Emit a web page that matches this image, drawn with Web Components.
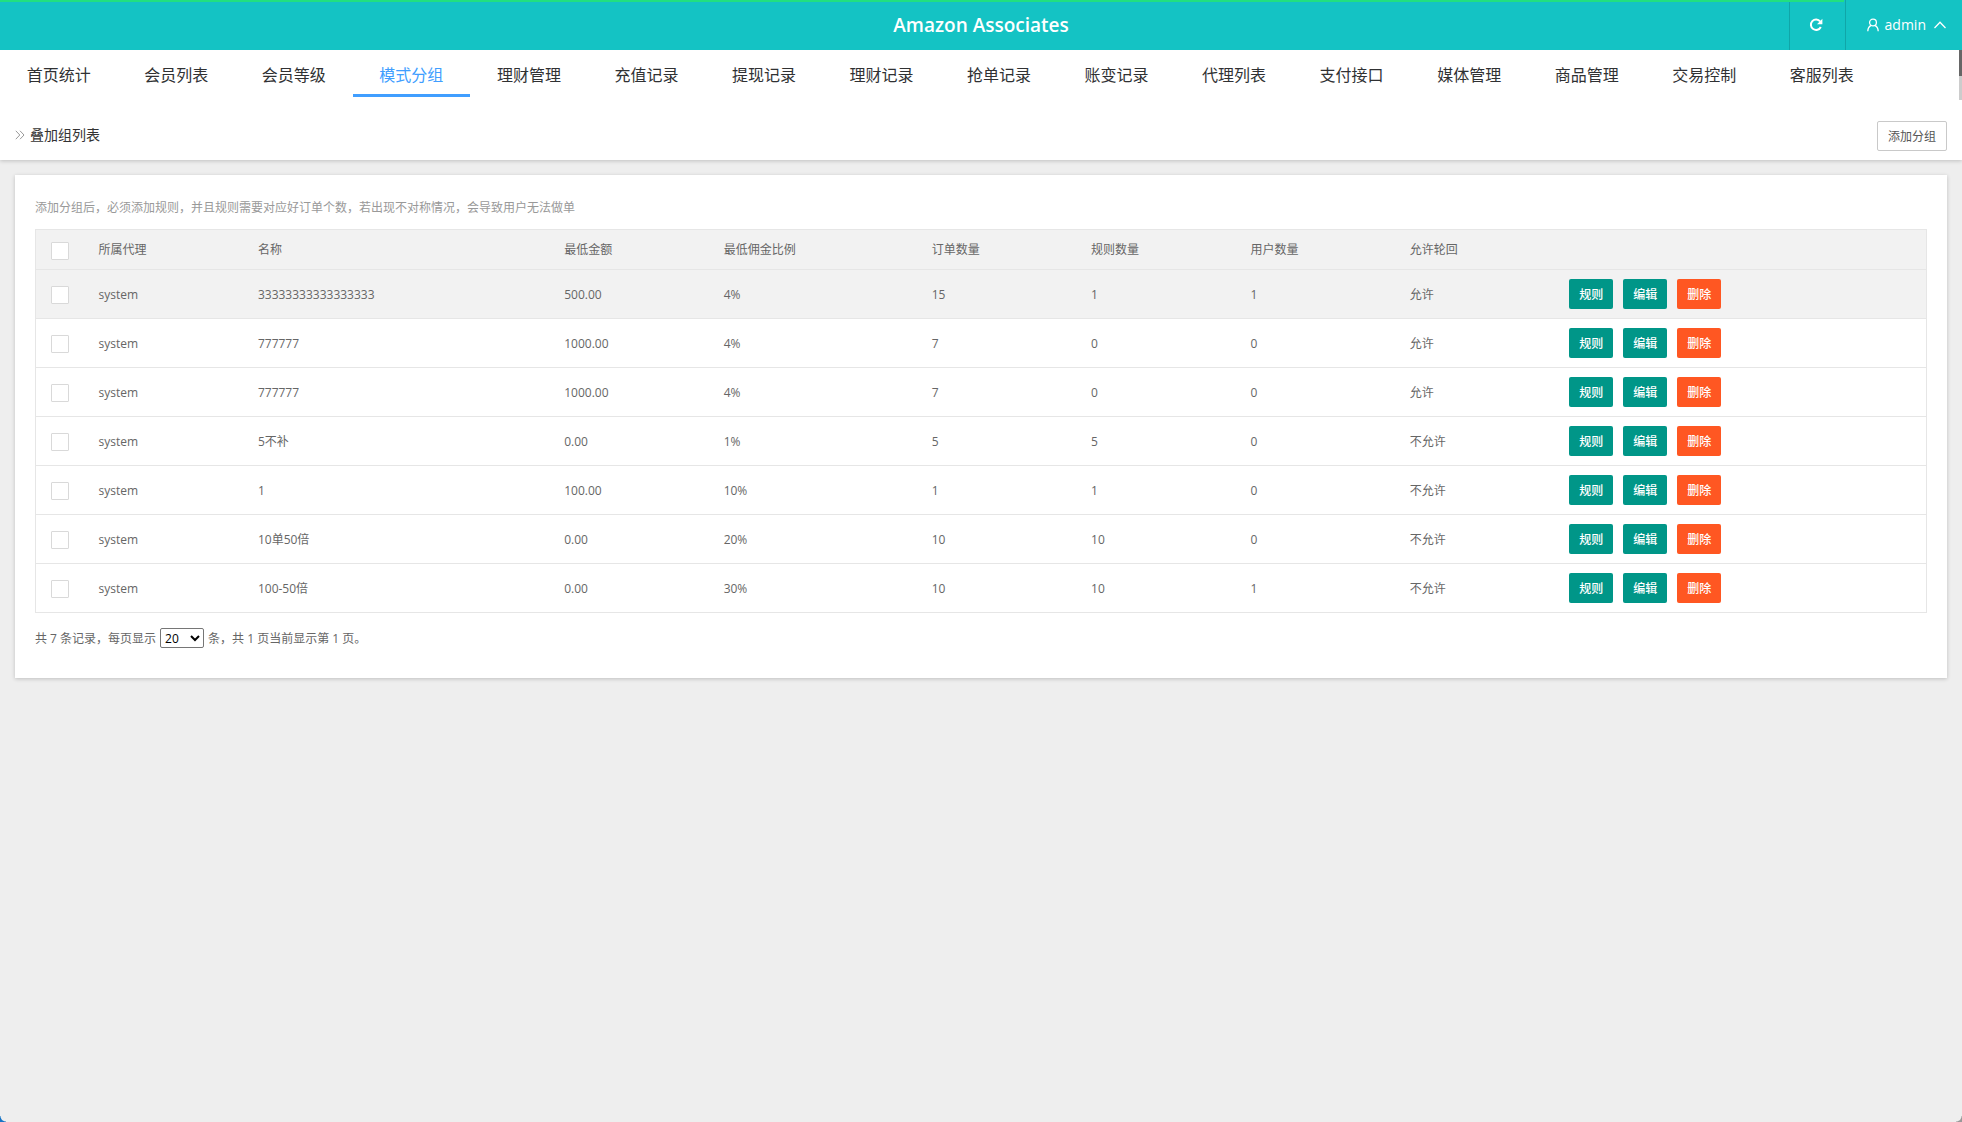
<!DOCTYPE html>
<html lang="zh-CN">
<head>
<meta charset="utf-8">
<title>Amazon Associates</title>
<style>
html, body { margin: 0; min-height: 100%; }
body { background: #eee; color: #666; font: 12px/18px "Open Sans", "Noto Sans CJK SC", sans-serif; }
</style>
</head>
<body>
<admin-app></admin-app>

<script>
class BaseElement extends HTMLElement {
  connectedCallback() {
    if (this.shadowRoot) return;
    this.attachShadow({ mode: 'open' }).innerHTML =
      '<style>*{box-sizing:border-box}' + this.styles() + '</style>' + this.markup();
  }
}

customElements.define('app-header', class extends BaseElement {
  styles() { return `
    :host { display: block; position: relative; background: #14c3c4; color: #fff; }
    header { display: grid; grid-template-columns: 1fr auto 1fr; align-items: center; height: 50px; }
    h1 { grid-column: 2; margin: 0; font-size: 19px; line-height: 50px; font-weight: 600; }
    .tools { display: flex; justify-content: flex-end; }
    button { display: flex; align-items: center; height: 50px; margin: 0; border: 0; border-left: 1px solid #10a6a8;
      background: none; color: inherit; font: 14px/20px "Open Sans", "Noto Sans CJK SC", sans-serif; cursor: pointer; }
    .refresh { width: 56px; padding: 0 2px 0 0; justify-content: center; }
    .user { padding: 0 16px 0 21px; gap: 6px; }
    .user .caret { margin-left: 2px; }
    .progress { position: absolute; left: 0; top: 0; width: 94%; height: 2px; background: #22df80; }
    svg { display: block; fill: none; stroke: #fff; }`; }
  markup() { return `
    <header>
      <h1>Amazon Associates</h1>
      <div class="tools">
        <button class="refresh" type="button" aria-label="刷新">
          <svg width="14" height="14" viewBox="0 0 14 14" stroke-width="2">
            <path d="M11.2 3.5A5.2 5.2 0 1 0 11.8 9"/><path d="M13.4.8v5.4H8z" fill="#fff" stroke="none"/>
          </svg>
        </button>
        <button class="user" type="button">
          <svg width="12" height="14" viewBox="0 0 12 14" stroke-width="1.3">
            <circle cx="6" cy="4.5" r="3.4"/><path d="M.8 13.3c.1-3.1 1.2-4.8 3.3-5.9M11.2 13.3c-.1-3.1-1.2-4.8-3.3-5.9"/>
          </svg>
          <span>admin</span>
          <svg class="caret" width="12" height="8" viewBox="0 0 12 8" stroke-width="1.3"><path d="M.5 7 6 1.3 11.5 7"/></svg>
        </button>
      </div>
    </header>
    <div class="progress"></div>`; }
});

customElements.define('app-tabs', class extends BaseElement {
  styles() { return `
    :host { display: flex; align-items: flex-start; height: 60px; background: #fff; }
    nav { flex: 1; display: flex; overflow: hidden; }
    a { flex: 0 0 6%; height: 47px; border-bottom: 3px solid transparent; text-align: center; white-space: nowrap;
      color: #303133; font-size: 16px; line-height: 50px; text-decoration: none; }
    a[aria-current] { color: #409eff; border-color: #409eff; }
    .track { width: 3px; height: 50px; background: #ccc; }
    .thumb { height: 26px; background: #666; }`; }
  markup() {
    const items = ['首页统计','会员列表','会员等级','模式分组','理财管理','充值记录','提现记录','理财记录',
      '抢单记录','账变记录','代理列表','支付接口','媒体管理','商品管理','交易控制','客服列表'];
    return `<nav>${items.map(t => `<a href="#"${t === '模式分组' ? ' aria-current="page"' : ''}>${t}</a>`).join('')}</nav>
      <div class="track"><div class="thumb"></div></div>`;
  }
});

customElements.define('page-title', class extends BaseElement {
  styles() { return `
    :host { display: block; background: #fff; box-shadow: 0 1px 4px rgba(0,0,0,.2); clip-path: inset(0 0 -8px 0); }
    .bar { display: flex; align-items: center; justify-content: space-between; height: 50px; padding: 0 15px; }
    .title { display: flex; align-items: center; gap: 5px; }
    svg { display: block; fill: none; stroke: #999; }
    h2 { margin: 0; color: #333; font-size: 14px; line-height: 20px; font-weight: 400; }
    button { height: 30px; margin-top: 2px; padding: 1px 10px 0; border: 1px solid #c9c9c9; border-radius: 2px; background: #fff;
      color: #555; font: 12px/28px "Open Sans", "Noto Sans CJK SC", sans-serif; cursor: pointer; }`; }
  markup() { return `
    <div class="bar">
      <div class="title">
        <svg width="10" height="10" viewBox="0 0 10 10"><path d="M.8.8 4.8 5 .8 9.2M5 .8 9 5 5 9.2"/></svg>
        <h2><slot></slot></h2>
      </div>
      <button type="button">添加分组</button>
    </div>`; }
});

customElements.define('group-table', class extends BaseElement {
  styles() { return `
    :host { display: block; }
    table { width: 100%; table-layout: fixed; border-collapse: collapse; border: 1px solid #e6e6e6; }
    th, td { padding: 0 15px; border-bottom: 1px solid #e6e6e6; text-align: left; font-weight: 400; white-space: nowrap; }
    th { height: 40px; }
    td { height: 49px; padding-top: 2px; }
    td:first-child, td:last-child { padding-top: 0; }
    thead, tbody tr:first-child { background: #f2f2f2; }
    .check { width: 48px; }
    .base { width: 8.43%; }
    .name { width: 16.2%; }
    .rate { width: 11%; }
    input { appearance: none; display: block; width: 18px; height: 18px; margin: 2px 0 0; border: 1px solid #d9d9d9;
      border-radius: 1px; background: #fff; }
    .actions { display: flex; gap: 10px; }
    button { height: 30px; padding: 1px 10px 0; border: 0; border-radius: 2px; background: #009688; color: #fff;
      font: 500 12px/28px "Open Sans", "Noto Sans CJK SC", sans-serif; cursor: pointer; }
    .danger { background: #ff5722; }`; }
  markup() {
    const heads = [['所属代理','base'],['名称','name'],['最低金额','base'],['最低佣金比例','rate'],
      ['订单数量','base'],['规则数量','base'],['用户数量','base'],['允许轮回','base']];
    const rows = [
      ['system','33333333333333333','500.00','4%','15','1','1','允许'],
      ['system','777777','1000.00','4%','7','0','0','允许'],
      ['system','777777','1000.00','4%','7','0','0','允许'],
      ['system','5不补','0.00','1%','5','5','0','不允许'],
      ['system','1','100.00','10%','1','1','0','不允许'],
      ['system','10单50倍','0.00','20%','10','10','0','不允许'],
      ['system','100-50倍','0.00','30%','10','10','1','不允许']];
    return `<table>
      <thead><tr><th class="check"><input type="checkbox" aria-label="全选"></th>
      ${heads.map(([t, c]) => `<th class="${c}">${t}</th>`).join('')}<th></th></tr></thead>
      <tbody>${rows.map(r => `<tr><td><input type="checkbox" aria-label="选择"></td>
        ${r.map(c => `<td>${c}</td>`).join('')}
        <td><div class="actions"><button type="button">规则</button><button type="button">编辑</button><button type="button" class="danger">删除</button></div></td></tr>`).join('')}
      </tbody></table>`;
  }
});

customElements.define('page-footer', class extends BaseElement {
  styles() { return `
    :host { display: flex; align-items: center; gap: 4px; height: 20px; margin-top: 15px; }
    label { display: flex; align-items: center; gap: 4px; }
    span { padding-top: 1px; }
    select { width: 44px; height: 20px; margin: 0; padding: 0; border: 1px solid #767676; border-radius: 2px; background: #fff;
      color: #000; font: 12px/18px "Open Sans", sans-serif; }`; }
  markup() { return `
    <label><span>共 7 条记录，每页显示</span><select><option>20</option><option>50</option></select></label>
    <span>条，共 1 页当前显示第 1 页。</span>`; }
});

customElements.define('content-card', class extends BaseElement {
  styles() { return `
    :host { display: block; margin: 15px; padding: 23px 20px 30px; background: #fff; box-shadow: 0 1px 4px rgba(0,0,0,.2); }
    p { margin: 0 0 11px; color: #999; line-height: 20px; }`; }
  markup() { return `<p>添加分组后，必须添加规则，并且规则需要对应好订单个数，若出现不对称情况，会导致用户无法做单</p><slot></slot>`; }
});

customElements.define('admin-app', class extends BaseElement {
  styles() { return `
    :host { display: block; }
    i { position: fixed; bottom: 0; width: 6px; height: 6px; }
    .left { left: 0; background: radial-gradient(circle at 100% 0, transparent 5px, #1673c5 6px); }
    .right { right: 0; background: radial-gradient(circle at 0 0, transparent 5px, #999 6px); }`; }
  markup() { return `
    <app-header></app-header>
    <app-tabs></app-tabs>
    <page-title>叠加组列表</page-title>
    <content-card>
      <group-table></group-table>
      <page-footer></page-footer>
    </content-card>
    <i class="left"></i><i class="right"></i>`; }
});
</script>
</body>
</html>
